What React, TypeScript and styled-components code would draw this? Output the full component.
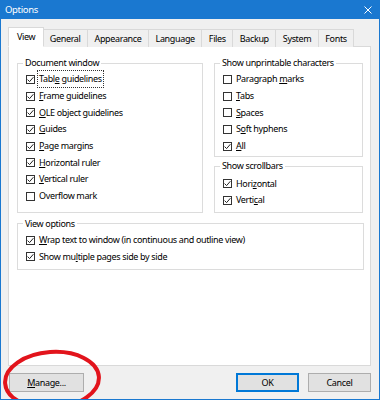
import React, { ReactElement } from 'react';
import styled, { createGlobalStyle } from 'styled-components';

const GlobalStyle = createGlobalStyle`
  html, body { margin: 0; padding: 0; }
  body {
    font-family: "Noto Sans", "Open Sans", sans-serif;
    font-size: 9px;
    letter-spacing: -0.35px;
    color: #000;
    background: #fff;
  }
`;

const Window = styled.div`
  position: relative;
  box-sizing: border-box;
  width: 380px;
  height: 400px;
  display: flex;
  flex-direction: column;
  background: #f0f0f0;
  border: 1px solid #1a78d0;
  border-top: none;
  overflow: hidden;
`;

const TitleBar = styled.div`
  height: 19px;
  margin: 0 -1px;
  padding: 0 8px 0 5px;
  display: flex;
  align-items: center;
  justify-content: space-between;
  background: #1a78d0;
  color: #fff;
  font-size: 9.5px;
`;

const Body = styled.div`
  flex: 1;
  display: flex;
  flex-direction: column;
  padding: 8px 8px 0 7px;
`;

const TabStrip = styled.div`
  display: flex;
  align-items: flex-end;
  padding-left: 2px;
  margin-bottom: -1px;
  position: relative;
  z-index: 1;
`;

const Tab = styled.div<{ $active?: boolean }>`
  box-sizing: border-box;
  height: ${(p) => (p.$active ? '20px' : '18px')};
  padding: ${(p) => (p.$active ? '0 8px 2px' : '0 6.5px')};
  margin: ${(p) => (p.$active ? '0 -2px' : '0 0 0 -1px')};
  display: flex;
  align-items: center;
  background: ${(p) => (p.$active ? '#fff' : '#f0f0f0')};
  border: 1px solid #d9d9d9;
  border-bottom: ${(p) => (p.$active ? '1px solid #fff' : 'none')};
  position: relative;
  z-index: ${(p) => (p.$active ? 2 : 1)};
  &:nth-child(2) { margin-left: 0; }
`;

const Panel = styled.div`
  box-sizing: border-box;
  height: 320px;
  background: #fff;
  border: 1px solid #d9d9d9;
  padding: 10px 6px 0 8px;
  display: flex;
  flex-direction: column;
  gap: 5px;
`;

const TopGrid = styled.div`
  display: grid;
  grid-template-columns: 186px 149px;
  column-gap: 11px;
`;

const Column = styled.div`
  display: flex;
  flex-direction: column;
  gap: 3px;
`;

const Group = styled.fieldset<{ $pt?: number; $pb?: number }>`
  margin: 0;
  min-width: 0;
  border: 1px solid #dcdcdc;
  padding: ${(p) => p.$pt ?? 2}px 8px ${(p) => p.$pb ?? 3}px 8px;
  display: flex;
  flex-direction: column;
`;

const Legend = styled.legend`
  padding: 0 2px;
  margin-left: -3px;
  line-height: 12px;
`;

const Row = styled.label`
  display: flex;
  align-items: center;
  gap: 4px;
  height: 16.7px;
`;

const Box = styled.span`
  box-sizing: border-box;
  width: 9px;
  height: 9px;
  border: 1px solid #333;
  background: #fff;
  display: flex;
  align-items: center;
  justify-content: center;
  flex-shrink: 0;
`;

const Text = styled.span<{ $focus?: boolean }>`
  padding: 1px 1px 2px;
  margin-left: -1px;
  outline: ${(p) => (p.$focus ? '1px dotted #333' : 'none')};
  outline-offset: 0;
  white-space: nowrap;
`;

const Key = styled.u`
  text-decoration: underline;
  text-underline-offset: 1px;
`;

const Footer = styled.div`
  display: flex;
  align-items: center;
  gap: 9px;
  margin-top: 7px;
  padding-left: 1px;
`;

const Button = styled.button<{ $default?: boolean; $w: number }>`
  box-sizing: border-box;
  width: ${(p) => p.$w}px;
  height: 19px;
  padding: 0;
  font: inherit;
  letter-spacing: inherit;
  color: #000;
  background: #e1e1e1;
  border: 1px solid ${(p) => (p.$default ? '#0078d7' : '#adadad')};
  box-shadow: ${(p) => (p.$default ? 'inset 0 0 0 1px #0078d7' : 'none')};
`;

const Spacer = styled.div`
  flex: 1;
`;

const Annotation = styled.svg`
  position: absolute;
  left: 0;
  top: 340px;
  pointer-events: none;
`;

const Check = ({ on }: { on?: boolean }): ReactElement => (
  <Box>
    {on && (
      <svg width="7" height="7" viewBox="0 0 7 7">
        <path d="M0.6 3.6 L2.6 5.6 L6.4 1.2" fill="none" stroke="#222" strokeWidth="1" />
      </svg>
    )}
  </Box>
);

type Item = { pre: string; k: string; post: string; on?: boolean; focus?: boolean };

const Option = ({ pre, k, post, on, focus }: Item): ReactElement => (
  <Row>
    <Check on={on} />
    <Text $focus={focus}>
      {pre}
      {k && <Key>{k}</Key>}
      {post}
    </Text>
  </Row>
);

const documentWindow: Item[] = [
  { pre: 'Tabl', k: 'e', post: ' guidelines', on: true, focus: true },
  { pre: '', k: 'F', post: 'rame guidelines', on: true },
  { pre: '', k: 'O', post: 'LE object guidelines', on: true },
  { pre: '', k: 'G', post: 'uides', on: true },
  { pre: '', k: 'P', post: 'age margins', on: true },
  { pre: '', k: 'H', post: 'orizontal ruler', on: true },
  { pre: '', k: 'V', post: 'ertical ruler', on: true },
  { pre: 'Overflow mark', k: '', post: '' },
];

const unprintable: Item[] = [
  { pre: 'Paragraph ', k: 'm', post: 'arks' },
  { pre: '', k: 'T', post: 'abs' },
  { pre: '', k: 'S', post: 'paces' },
  { pre: 'S', k: 'o', post: 'ft hyphens' },
  { pre: '', k: 'A', post: 'll', on: true },
];

const scrollbars: Item[] = [
  { pre: 'Hori', k: 'z', post: 'ontal', on: true },
  { pre: 'Verti', k: 'c', post: 'al', on: true },
];

const viewOptions: Item[] = [
  { pre: '', k: 'W', post: 'rap text to window (in continuous and outline view)', on: true },
  { pre: 'Show mu', k: 'l', post: 'tiple pages side by side', on: true },
];

const tabs = ['View', 'General', 'Appearance', 'Language', 'Files', 'Backup', 'System', 'Fonts'];

const App = (): ReactElement => (
  <>
    <GlobalStyle />
    <Window>
      <TitleBar>
        <span>Options</span>
        <svg width="8" height="8" viewBox="0 0 8 8">
          <path d="M0.5 0.5 L7.5 7.5 M7.5 0.5 L0.5 7.5" stroke="#fff" strokeWidth="1" />
        </svg>
      </TitleBar>
      <Body>
        <TabStrip>
          {tabs.map((t, i) => (
            <Tab key={t} $active={i === 0}>{t}</Tab>
          ))}
        </TabStrip>
        <Panel>
          <TopGrid>
            <Group $pb={7}>
              <Legend>Document window</Legend>
              {documentWindow.map((o) => <Option {...o} key={o.pre + o.post} />)}
            </Group>
            <Column>
              <Group $pb={2}>
                <Legend>Show unprintable characters</Legend>
                {unprintable.map((o) => <Option {...o} key={o.pre + o.post} />)}
              </Group>
              <Group $pt={3} $pb={3}>
                <Legend>Show scrollbars</Legend>
                {scrollbars.map((o) => <Option {...o} key={o.pre + o.post} />)}
              </Group>
            </Column>
          </TopGrid>
          <Group $pb={4}>
            <Legend>View options</Legend>
            {viewOptions.map((o) => <Option {...o} key={o.pre + o.post} />)}
          </Group>
        </Panel>
        <Footer>
          <Button $w={75}>
            <Key>M</Key>anage...
          </Button>
          <Spacer />
          <Button $w={63} $default>OK</Button>
          <Button $w={63}>Cancel</Button>
        </Footer>
      </Body>
      <Annotation width="110" height="60" viewBox="0 0 110 60">
        <ellipse cx="51" cy="40" rx="47" ry="28" fill="none" stroke="#e2141c" strokeWidth="4" transform="rotate(-4 51 40)" />
      </Annotation>
    </Window>
  </>
);

export default App;
